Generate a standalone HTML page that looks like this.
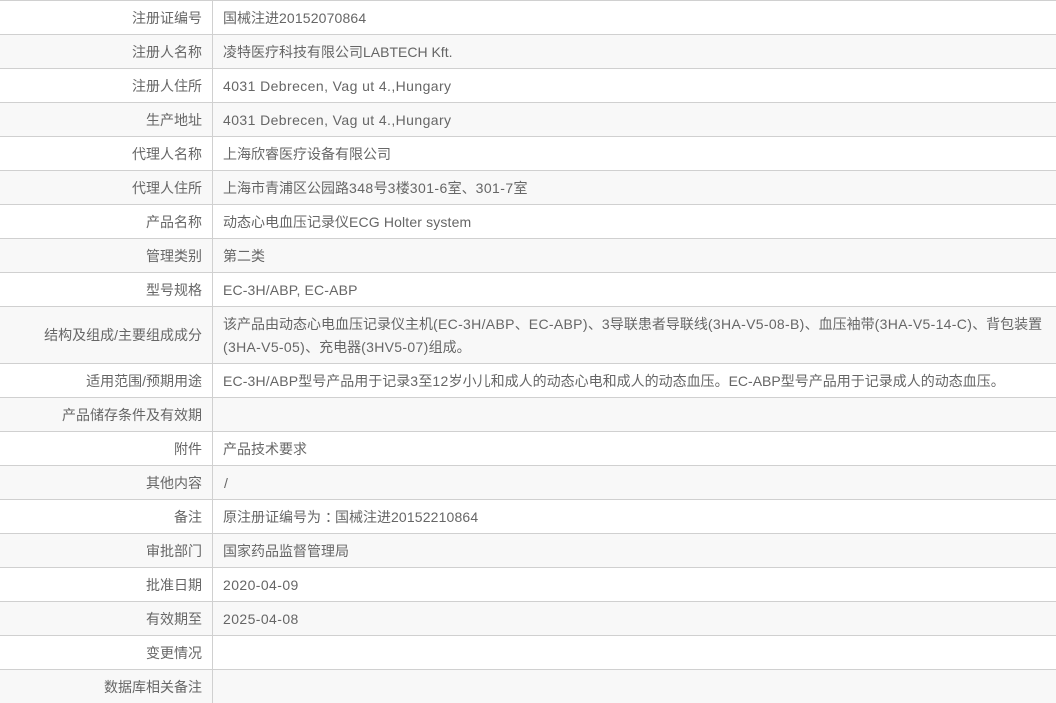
<!DOCTYPE html>
<html lang="zh-CN">
<head>
<meta charset="utf-8">
<style>
html,body{margin:0;padding:0;background:#fff;width:1056px;height:702px;overflow:hidden}
body{font-family:"Liberation Sans","Noto Sans CJK SC",sans-serif;font-size:14px;color:#666}
table{border-collapse:collapse;width:1056px;table-layout:fixed;position:absolute;left:0;top:0}
td{border-top:1px solid #d0d0d0;padding:1px 0 0;height:32px;line-height:23px;vertical-align:middle}
td.l{width:202px;padding-right:10px;text-align:right;border-right:1px solid #d0d0d0}
td.v{padding-left:10px}
tr:nth-child(even) td{background:#f8f8f8}
tr.tall td{height:55px}
.a{letter-spacing:.41px}
.b{letter-spacing:.15px}
.c{letter-spacing:.32px}
.tc{position:relative;left:4px}
</style>
</head>
<body>
<table>
<tr><td class="l">注册证编号</td><td class="v">国械注进<span class="b">20152070864</span></td></tr>
<tr><td class="l">注册人名称</td><td class="v">凌特医疗科技有限公司LABTECH Kft.</td></tr>
<tr><td class="l">注册人住所</td><td class="v"><span class="a">4031 Debrecen, Vag ut 4.,Hungary</span></td></tr>
<tr><td class="l">生产地址</td><td class="v"><span class="a">4031 Debrecen, Vag ut 4.,Hungary</span></td></tr>
<tr><td class="l">代理人名称</td><td class="v">上海欣睿医疗设备有限公司</td></tr>
<tr><td class="l">代理人住所</td><td class="v">上海市青浦区公园路<span class="a">348</span>号<span class="a">3</span>楼<span class="a">301-6</span>室、<span class="a">301-7</span>室</td></tr>
<tr><td class="l">产品名称</td><td class="v">动态心电血压记录仪<span class="b">ECG Holter system</span></td></tr>
<tr><td class="l">管理类别</td><td class="v">第二类</td></tr>
<tr><td class="l">型号规格</td><td class="v"><span class="b">EC-3H/ABP, EC-ABP</span></td></tr>
<tr class="tall"><td class="l">结构及组成/主要组成成分</td><td class="v">该产品由动态心电血压记录仪主机<span class="c">(EC-3H/ABP</span>、<span class="c">EC-ABP)</span>、<span class="c">3</span>导联患者导联线<span class="c">(3HA-V5-08-B)</span>、血压袖带<span class="c">(3HA-V5-14-C)</span>、背包装置<br><span class="c">(3HA-V5-05)</span>、充电器<span class="c">(3HV5-07)</span>组成。</td></tr>
<tr><td class="l">适用范围/预期用途</td><td class="v"><span class="b">EC-3H/ABP</span>型号产品用于记录<span class="c">3</span>至<span class="c">12</span>岁小儿和成人的动态心电和成人的动态血压。EC-ABP型号产品用于记录成人的动态血压。</td></tr>
<tr><td class="l">产品储存条件及有效期</td><td class="v"></td></tr>
<tr><td class="l">附件</td><td class="v">产品技术要求</td></tr>
<tr><td class="l">其他内容</td><td class="v"><span style="padding-left:1px">/</span></td></tr>
<tr><td class="l">备注</td><td class="v">原注册证编号为<span class="tc">：</span>国械注进<span class="b">20152210864</span></td></tr>
<tr><td class="l">审批部门</td><td class="v">国家药品监督管理局</td></tr>
<tr><td class="l">批准日期</td><td class="v"><span class="a">2020-04-09</span></td></tr>
<tr><td class="l">有效期至</td><td class="v"><span class="a">2025-04-08</span></td></tr>
<tr><td class="l">变更情况</td><td class="v"></td></tr>
<tr><td class="l">数据库相关备注</td><td class="v"></td></tr>
</table>
</body>
</html>
